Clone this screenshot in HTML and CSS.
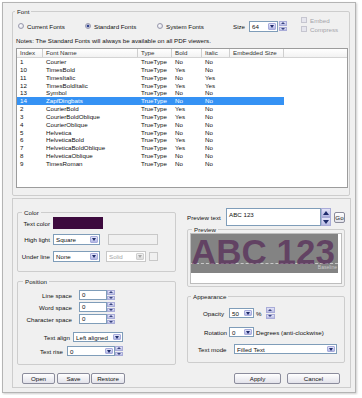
FILE: index.html
```html
<!DOCTYPE html>
<html lang="en">
<head>
<meta charset="UTF-8">
<meta name="viewport" content="width=device-width, initial-scale=1.0">
<title>Font Settings</title>
<link rel="stylesheet" href="styles.css">
</head>
<body>
<div class="window">
  <fieldset class="group font-group">
    <legend>Font</legend>
    <div class="top-row">
      <label class="radio r1"><span class="dot"></span>Current Fonts</label>
      <label class="radio r2"><span class="dot on"></span>Standard Fonts</label>
      <label class="radio r3"><span class="dot"></span>System Fonts</label>
      <span class="size-label">Size</span>
      <div class="select size-select"><span class="value">64</span><span class="arrow"></span></div>
      <div class="spin size-spin"><span class="up"></span><span class="down"></span></div>
      <div class="checks">
        <label class="check"><span class="box"></span>Embed</label>
        <label class="check"><span class="box"></span>Compress</label>
      </div>
    </div>
    <p class="notes">Notes: The Standard Fonts will always be available on all PDF viewers.</p>
    <div class="list">
      <div class="list-head"><span>Index</span><span>Font Name</span><span>Type</span><span>Bold</span><span>Italic</span><span>Embedded Size</span></div>
      <div class="list-row"><span>1</span><span>Courier</span><span>TrueType</span><span>No</span><span>No</span><span></span></div>
      <div class="list-row"><span>10</span><span>TimesBold</span><span>TrueType</span><span>Yes</span><span>No</span><span></span></div>
      <div class="list-row"><span>11</span><span>TimesItalic</span><span>TrueType</span><span>No</span><span>Yes</span><span></span></div>
      <div class="list-row"><span>12</span><span>TimesBoldItalic</span><span>TrueType</span><span>Yes</span><span>Yes</span><span></span></div>
      <div class="list-row"><span>13</span><span>Symbol</span><span>TrueType</span><span>No</span><span>No</span><span></span></div>
      <div class="list-row selected"><span>14</span><span>ZapfDingbats</span><span>TrueType</span><span>No</span><span>No</span><span></span></div>
      <div class="list-row"><span>2</span><span>CourierBold</span><span>TrueType</span><span>Yes</span><span>No</span><span></span></div>
      <div class="list-row"><span>3</span><span>CourierBoldOblique</span><span>TrueType</span><span>Yes</span><span>No</span><span></span></div>
      <div class="list-row"><span>4</span><span>CourierOblique</span><span>TrueType</span><span>No</span><span>No</span><span></span></div>
      <div class="list-row"><span>5</span><span>Helvetica</span><span>TrueType</span><span>No</span><span>No</span><span></span></div>
      <div class="list-row"><span>6</span><span>HelveticaBold</span><span>TrueType</span><span>Yes</span><span>No</span><span></span></div>
      <div class="list-row"><span>7</span><span>HelveticaBoldOblique</span><span>TrueType</span><span>Yes</span><span>No</span><span></span></div>
      <div class="list-row"><span>8</span><span>HelveticaOblique</span><span>TrueType</span><span>No</span><span>No</span><span></span></div>
      <div class="list-row"><span>9</span><span>TimesRoman</span><span>TrueType</span><span>No</span><span>No</span><span></span></div>
    </div>
  </fieldset>

  <div class="lower">
    <div class="left-col">
      <fieldset class="group color-group">
        <legend>Color</legend>
        <div class="field color-row">
          <span class="field-label">Text color</span>
          <span class="swatch"></span>
        </div>
        <div class="field hl-row">
          <span class="field-label">High light</span>
          <div class="select hl-select"><span class="value">Square</span><span class="arrow"></span></div>
          <span class="input disabled hl-input"></span>
        </div>
        <div class="field ul-row">
          <span class="field-label">Under line</span>
          <div class="select ul-select"><span class="value">None</span><span class="arrow"></span></div>
          <div class="select disabled solid-select"><span class="value">Solid</span><span class="arrow"></span></div>
          <span class="input disabled ul-box"></span>
        </div>
      </fieldset>

      <fieldset class="group position-group">
        <legend>Position</legend>
        <div class="field pos-row line-row">
          <span class="field-label">Line space</span>
          <span class="input num">0</span>
          <div class="spin"><span class="up"></span><span class="down"></span></div>
        </div>
        <div class="field pos-row">
          <span class="field-label">Word space</span>
          <span class="input num">0</span>
          <div class="spin"><span class="up"></span><span class="down"></span></div>
        </div>
        <div class="field pos-row">
          <span class="field-label">Character space</span>
          <span class="input num">0</span>
          <div class="spin"><span class="up"></span><span class="down"></span></div>
        </div>
        <div class="field align-row">
          <span class="field-label">Text align</span>
          <div class="select align-select"><span class="value">Left aligned</span><span class="arrow"></span></div>
        </div>
        <div class="field rise-row">
          <span class="field-label">Text rise</span>
          <div class="select rise-select"><span class="value">0</span><span class="arrow"></span></div>
          <div class="spin"><span class="up"></span><span class="down"></span></div>
        </div>
      </fieldset>

      <div class="buttons left-buttons">
        <button class="btn open">Open</button>
        <button class="btn save">Save</button>
        <button class="btn restore">Restore</button>
      </div>
    </div>

    <div class="right-col">
      <div class="preview-text-row">
        <span class="pt-label">Preview text</span>
        <div class="textarea">ABC 123</div>
        <div class="scroll"><span class="up"></span><span class="down"></span></div>
        <button class="btn go">Go</button>
      </div>

      <fieldset class="group preview-group">
        <legend>Preview</legend>
        <div class="preview-box">
          <div class="preview-canvas">
            <div class="glyphs">ABC 123</div>
            <div class="baseline-label">Baseline</div>
          </div>
        </div>
      </fieldset>

      <fieldset class="group appearance-group">
        <legend>Appearance</legend>
        <div class="field opacity-row">
          <span class="field-label">Opacity</span>
          <div class="select small-select"><span class="value">50</span><span class="arrow"></span></div>
          <span class="unit">%</span>
          <div class="spin opacity-spin"><span class="up"></span><span class="down"></span></div>
        </div>
        <div class="field rotation-row">
          <span class="field-label">Rotation</span>
          <div class="select small-select"><span class="value">0</span><span class="arrow"></span></div>
          <span class="unit">Degrees (anti-clockwise)</span>
        </div>
        <div class="field mode-row">
          <span class="field-label">Text mode</span>
          <div class="select mode-select"><span class="value">Filled Text</span><span class="arrow"></span></div>
        </div>
      </fieldset>

      <div class="buttons right-buttons">
        <button class="btn apply">Apply</button>
        <button class="btn cancel">Cancel</button>
      </div>
    </div>
  </div>
</div>
</body>
</html>
```

FILE: styles.css
```css
* { box-sizing: border-box; }
body { margin: 0; background: #fff; font-family: "Liberation Sans", Arial, sans-serif; font-size: 6.2px; color: #111; }
.window { width: 354px; height: 391px; margin: 2px; padding: 5px 0 0 9px; background: #f0f0f0; border: 1px solid #b4b4b4; box-shadow: 1px 1px 2px rgba(0, 0, 0, 0.2); }

/* group boxes */
.group { margin: 0; padding: 0; border: 1px solid #cdcdcd; border-radius: 2px; min-width: 0; }
.group legend { padding: 0 2px; margin-left: 4px; line-height: 7px; color: #222; }
.font-group { width: 338px; padding: 0 1px 7px 3px; }
.font-group legend { margin-left: -1px; }

/* top row */
.top-row { display: flex; align-items: center; height: 12px; margin-top: 5px; }
.radio { display: flex; align-items: center; flex: none; }
.radio .dot { width: 6px; height: 6px; margin-right: 3px; border-radius: 50%; border: 1px solid #9a9aae; background: radial-gradient(circle at 40% 40%, #fff, #cfd0dc); }
.radio .dot.on { background: radial-gradient(circle, #25357c 0, #3b4e9c 45%, #dfe0ea 60%); }
.r1 { margin-left: 2px; width: 67px; }
.r2 { width: 72px; }
.r3 { width: 76px; }
.size-label { width: 16px; flex: none; }
.size-select { width: 29px; }
.size-spin { margin-left: 1px; }
.checks { display: flex; flex-direction: column; margin-left: 14px; margin-top: -3px; }
.check { display: flex; align-items: center; height: 9px; color: #a4a4aa; }
.check .box { width: 6px; height: 6px; margin-right: 3px; border: 1px solid #c6c6d0; background: #e6e6ee; }

.notes { margin: 5px 0 0; line-height: 7px; }

/* font list */
.list { width: 332px; height: 140px; margin-top: 4px; border: 1px solid #9c9c9c; background: #fff; }
.list-head, .list-row { display: grid; grid-template-columns: 26px 95px 34px 30px 28px 54px; }
.list-head { height: 9px; line-height: 8px; border-bottom: 1px solid #d4d4d4; background: linear-gradient(#fff, #f2f2f2); color: #333; }
.list-head span { padding-left: 3px; border-right: 1px solid #cfcfcf; }
.list-row { width: 267px; height: 7.85px; line-height: 7.85px; }
.list-row span { padding-left: 3px; white-space: nowrap; overflow: hidden; }
.list-row.selected { background: #3592f4; color: #fff; }

/* lower panel */
.lower { display: flex; width: 339px; height: 190px; margin-top: 2px; padding-left: 4px; border: 1px solid #cdcdcd; }
.left-col { width: 159px; flex: none; }
.right-col { width: 158px; flex: none; margin-left: 11px; }

.field { display: flex; align-items: center; }
.field-label { flex: none; text-align: right; }

/* controls */
.select { display: flex; height: 11px; border: 1px solid #7f9db9; background: #fff; flex: none; }
.select .value { flex: 1; padding-left: 2px; line-height: 9px; white-space: nowrap; overflow: hidden; }
.select .arrow { display: flex; align-items: center; justify-content: center; width: 8px; margin: 1px; border-radius: 1px; background: linear-gradient(#e3e5fa, #b2b6e4); border: 1px solid #a7abdc; }
.select .arrow::after { content: ""; border-left: 2px solid transparent; border-right: 2px solid transparent; border-top: 3px solid #1f2c6c; }
.select.disabled { border-color: #c8c8c8; color: #a6a6a6; }
.select.disabled .arrow { background: linear-gradient(#f2f2f2, #dcdcdc); border-color: #cfcfcf; }
.select.disabled .arrow::after { border-top-color: #a8a8a8; }

.input { display: block; height: 9px; border: 1px solid #7f9db9; background: #fff; padding-left: 2px; line-height: 7px; flex: none; }
.input.disabled { border-color: #c8c8c8; background: #f0f0f0; }

.spin { display: flex; flex-direction: column; gap: 1px; width: 8px; height: 10px; flex: none; }
.spin span { flex: 1; display: flex; align-items: center; justify-content: center; background: linear-gradient(#e4e5f8, #b8bbe4); border: 1px solid #a9acd8; }
.spin .up::after { content: ""; border-left: 2px solid transparent; border-right: 2px solid transparent; border-bottom: 2px solid #3a4580; }
.spin .down::after { content: ""; border-left: 2px solid transparent; border-right: 2px solid transparent; border-top: 2px solid #3a4580; }

.btn { height: 11px; padding: 0; font: inherit; color: #111; border: 1px solid #8b8c9c; border-radius: 2px; background: linear-gradient(#fff, #e2e2ea); flex: none; }

/* color group */
.color-group { margin-top: 10px; padding: 0 0 9px; }
.color-group legend { margin-left: 4px; }
.color-group .field-label { width: 32px; margin-right: 3px; }
.color-row { height: 12px; margin-top: 1px; }
.swatch { width: 50px; height: 12px; background: #3d0a3e; }
.hl-row { margin-top: 5px; }
.ul-row { margin-top: 6px; }
.hl-select, .ul-select { width: 47px; }
.hl-input { width: 50px; height: 11px; margin-left: 8px; }
.solid-select { width: 40px; margin-left: 6px; }
.ul-box { width: 9px; height: 9px; margin-left: 3px; }

/* position group */
.position-group { margin-top: 6px; padding: 0 0 8px; }
.position-group legend { margin-left: 5px; }
.pos-row, .align-row, .rise-row { height: 10px; }
.pos-row { margin-top: 2px; }
.line-row { margin-top: 5px; }
.pos-row .field-label { width: 54px; margin-right: 7px; }
.pos-row .input { width: 28px; height: 10px; }
.align-row { margin-top: 8px; }
.align-row .field-label { width: 52px; margin-right: 3px; }
.align-select { width: 50px; height: 10px; }
.rise-row { margin-top: 4px; }
.rise-row .field-label { width: 45px; margin-right: 4px; }
.rise-select { width: 48px; height: 10px; }

.buttons { display: flex; margin-top: 8px; }
.open { width: 33px; margin-left: 5px; }
.save { width: 33px; margin-left: 2px; }
.restore { width: 34px; margin-left: 1px; }

/* preview */
.preview-text-row { display: flex; align-items: center; height: 18px; margin-top: 9px; }
.pt-label { width: 39px; flex: none; }
.textarea { width: 95px; height: 18px; padding: 2px; border: 1px solid #7f9db9; background: #fff; line-height: 7px; flex: none; }
.scroll { display: flex; flex-direction: column; width: 10px; height: 18px; flex: none; }
.scroll span { flex: 1; display: flex; align-items: center; justify-content: center; background: linear-gradient(#e4e5f8, #b8bbe4); border: 1px solid #a9acd8; }
.scroll .up::after { content: ""; border-left: 3px solid transparent; border-right: 3px solid transparent; border-bottom: 4px solid #1f2c6c; }
.scroll .down::after { content: ""; border-left: 3px solid transparent; border-right: 3px solid transparent; border-top: 4px solid #1f2c6c; }
.go { width: 11px; margin-left: 3px; }

.preview-group { padding: 0 2px 2px; }
.preview-group legend { margin-left: 2px; }
.preview-box { height: 51px; border: 1px solid #bdbdbd; background: #fff; }
.preview-canvas { height: 39px; margin-right: 3px; background: #838383; }
.glyphs { height: 30px; line-height: 36px; font-size: 35px; font-weight: bold; color: rgba(70, 10, 72, 0.55); border-bottom: 1px dashed #c9c9c9; white-space: nowrap; }
.baseline-label { text-align: right; font-size: 5px; line-height: 6px; color: #c9c9c9; padding-right: 1px; }

/* appearance */
.appearance-group { margin-top: 6px; padding: 0 0 8px; }
.appearance-group legend { margin-left: 3px; }
.opacity-row { height: 12px; margin-top: 7px; }
.opacity-row .field-label { margin-left: 15px; width: 26px; text-align: left; }
.small-select { width: 25px; height: 10px; }
.unit { margin-left: 2px; white-space: nowrap; }
.opacity-spin { margin-left: 4px; width: 9px; height: 12px; }
.rotation-row { height: 10px; margin-top: 8px; }
.rotation-row .field-label { margin-left: 16px; width: 25px; text-align: left; }
.mode-row { height: 10px; margin-top: 7px; }
.mode-row .field-label { margin-left: 10px; width: 36px; text-align: left; }
.mode-select { width: 103px; height: 10px; }

.right-buttons { margin-top: 10px; }
.apply { width: 47px; margin-left: 47px; }
.cancel { width: 53px; margin-left: 6px; }
```
